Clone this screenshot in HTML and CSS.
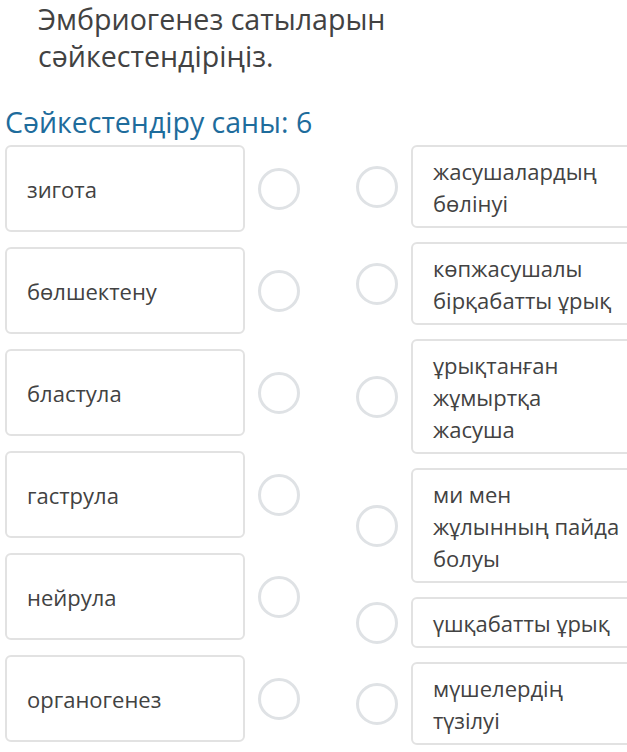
FILE: index.html
```html
<!DOCTYPE html>
<html lang="kk">
<head>
<meta charset="utf-8">
<link rel="stylesheet" href="styles.css">
</head>
<body>
<div class="page">
  <h1 class="question">Эмбриогенез сатыларын сәйкестендіріңіз.</h1>
  <h2 class="count">Сәйкестендіру саны: 6</h2>
  <div class="board">
    <div class="col col-left">
      <div class="row"><div class="card card-left">зигота</div><span class="radio"></span></div>
      <div class="row"><div class="card card-left">бөлшектену</div><span class="radio"></span></div>
      <div class="row"><div class="card card-left">бластула</div><span class="radio"></span></div>
      <div class="row"><div class="card card-left">гаструла</div><span class="radio"></span></div>
      <div class="row"><div class="card card-left">нейрула</div><span class="radio"></span></div>
      <div class="row"><div class="card card-left">органогенез</div><span class="radio"></span></div>
    </div>
    <div class="col col-right">
      <div class="row"><span class="radio"></span><div class="card card-right">жасушалардың<br>бөлінуі</div></div>
      <div class="row"><span class="radio"></span><div class="card card-right">көпжасушалы<br>бірқабатты ұрық</div></div>
      <div class="row"><span class="radio"></span><div class="card card-right">ұрықтанған<br>жұмыртқа<br>жасуша</div></div>
      <div class="row"><span class="radio"></span><div class="card card-right">ми мен<br>жұлынның пайда<br>болуы</div></div>
      <div class="row"><span class="radio"></span><div class="card card-right">үшқабатты ұрық</div></div>
      <div class="row"><span class="radio"></span><div class="card card-right">мүшелердің<br>түзілуі</div></div>
    </div>
  </div>
</div>
</body>
</html>
```
FILE: styles.css
```css
html, body {
  margin: 0;
  padding: 0;
  background: #ffffff;
}
body {
  width: 627px;
  height: 752px;
  overflow: hidden;
  font-family: "Open Sans", "Noto Sans", sans-serif;
  color: #414141;
}
.page {
  width: 627px;
}
.question {
  margin: 0;
  padding: 0 180px 0 38px;
  font-size: 28.6px;
  line-height: 37px;
  font-weight: 400;
  color: #424242;
}
.count {
  margin: 31px 0 6px 5px;
  font-size: 28.5px;
  line-height: 34px;
  font-weight: 400;
  color: #1e6c9c;
  white-space: nowrap;
}
.board {
  display: flex;
  padding-left: 5px;
  gap: 56px;
  align-items: flex-start;
}
.col {
  display: flex;
  flex-direction: column;
}
.col-left {
  gap: 15px;
}
.col-right {
  gap: 14px;
}
.row {
  display: flex;
  align-items: center;
  gap: 13px;
}
.card {
  box-sizing: border-box;
  border: 2px solid #e2e2e2;
  border-radius: 6px;
  background: #fff;
  font-size: 22px;
  color: #424242;
}
.card-left {
  width: 240px;
  height: 87px;
  display: flex;
  align-items: center;
  padding: 0 20px;
}
.card-right {
  width: 260px;
  padding: 8px 20px 7px;
  line-height: 32px;
  white-space: nowrap;
}
.radio {
  flex: none;
  box-sizing: border-box;
  width: 42px;
  height: 42px;
  border: 3px solid #dfe2e5;
  border-radius: 50%;
}
```
